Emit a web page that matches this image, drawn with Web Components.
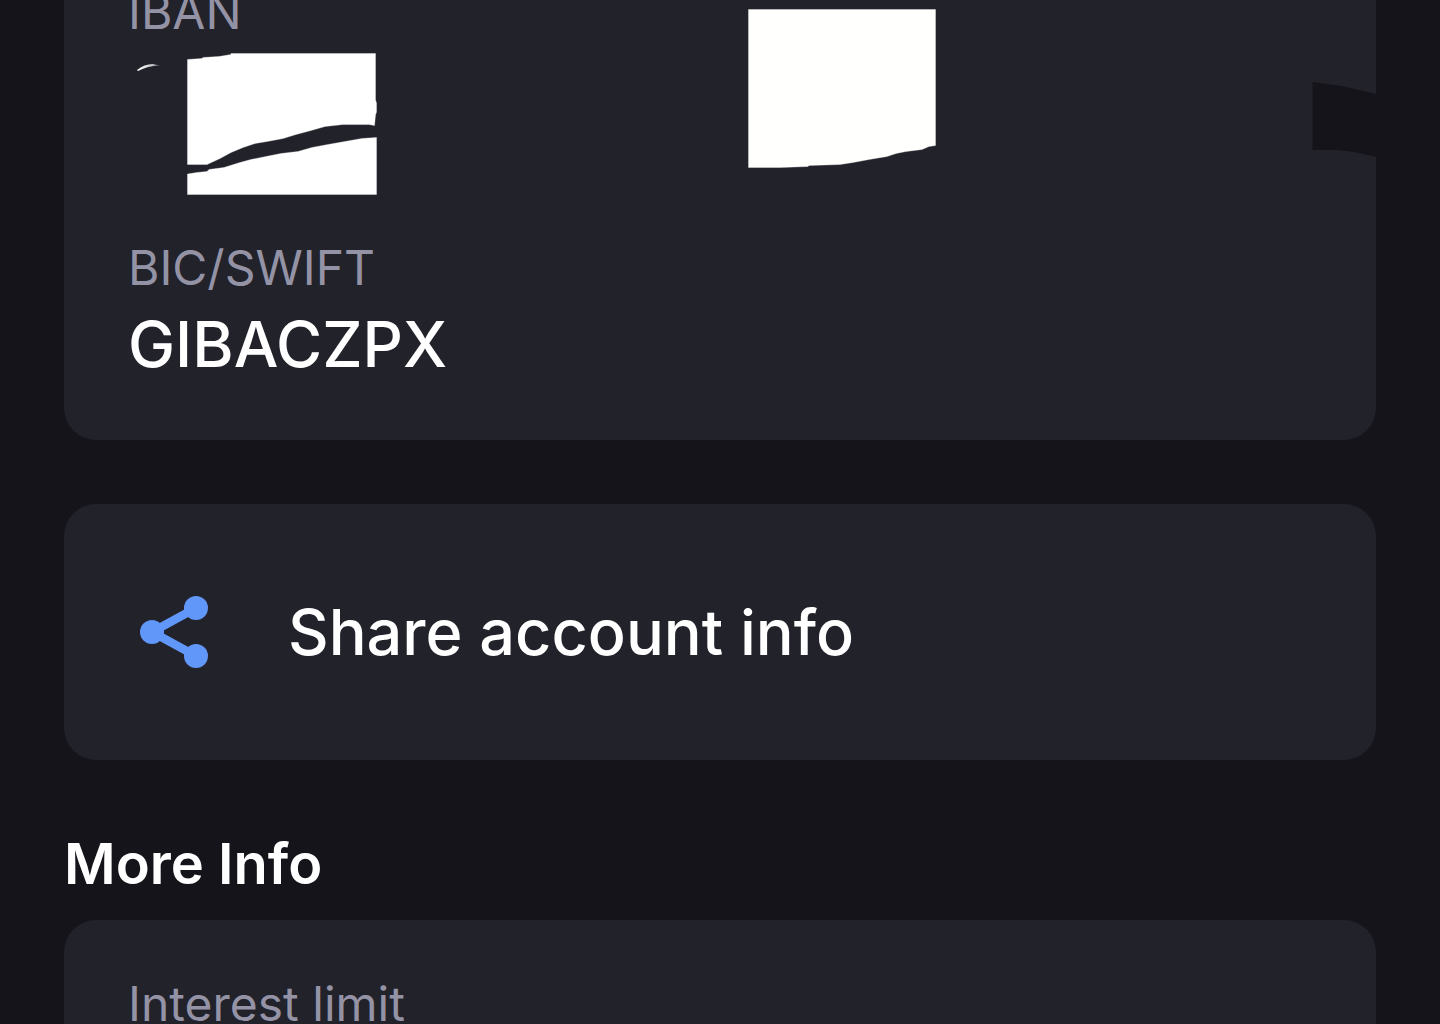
<!DOCTYPE html>
<html lang="en">
<head>
<meta charset="utf-8">
<meta name="viewport" content="width=device-width, initial-scale=1">
<title>Account details</title>
<style>
  html, body { margin: 0; height: 100%; overflow: hidden; background: #15141a; }
  body { font-family: Inter, "Liberation Sans", sans-serif; color: #fff; }
</style>
</head>
<body>
<account-page>
  <info-card>
    <info-field label="IBAN"></info-field>
    <info-field label="BIC/SWIFT">GIBACZPX</info-field>
    <iban-cover slot="cover"></iban-cover>
  </info-card>
  <action-card><share-icon slot="icon"></share-icon>Share account info</action-card>
  <info-section heading="More Info">
    <info-card>
      <info-field label="Interest limit"></info-field>
    </info-card>
  </info-section>
</account-page>

<script>
const define = (name, html, setup) => {
  customElements.define(name, class extends HTMLElement {
    constructor() {
      super();
      this.attachShadow({ mode: "open" }).innerHTML = html;
    }
    connectedCallback() { if (setup) setup(this, this.shadowRoot); }
  });
};

/* The page is scrolled: the first card begins above the window. */
define("account-page", `
  <style>
    :host { display: block; height: 100vh; overflow: hidden; }
    main { display: flex; flex-direction: column; gap: 64px; padding: 0 64px; margin-top: -72px; }
  </style>
  <main><slot></slot></main>`);

define("info-card", `
  <style>
    :host { display: block; position: relative; overflow: hidden; border-radius: 32px; background: #22222b; }
    .fields { display: flex; flex-direction: column; gap: 104px; padding: 48px 64px 56px; }
  </style>
  <div class="fields"><slot></slot></div>
  <slot name="cover"></slot>`);

define("info-field", `
  <style>
    :host { display: block; }
    dl, dt, dd { margin: 0; }
    dt { font-size: 48px; line-height: 72px; color: #9493a5; }
    dd { font-size: 63px; line-height: 80px; min-height: 80px; font-weight: 500; }
  </style>
  <dl><dt></dt><dd><slot></slot></dd></dl>`,
  (host, root) => { root.querySelector("dt").textContent = host.getAttribute("label"); });

define("action-card", `
  <style>
    :host { display: block; }
    button {
      display: flex; align-items: center; gap: 64px; width: 100%;
      margin: 0; padding: 80px 64px; border: 0; border-radius: 32px;
      background: #22222b; color: inherit; font: inherit;
      font-size: 63px; line-height: 96px; font-weight: 500; text-align: left; cursor: pointer;
    }
  </style>
  <button type="button"><slot name="icon"></slot><span><slot></slot></span></button>`);

define("share-icon", `
  <style>
    :host { display: block; flex: none; width: 96px; height: 96px; }
    svg { display: block; width: 100%; height: 100%; }
  </style>
  <svg viewBox="0 0 96 96" fill="#6197f8" aria-hidden="true">
    <path d="M68 24 24 48 68 72" fill="none" stroke="#6197f8" stroke-width="8.500"/>
    <circle cx="24" cy="48" r="12"/><circle cx="68" cy="24" r="12"/><circle cx="68" cy="72" r="12"/>
  </svg>`);

define("info-section", `
  <style>
    :host { display: block; }
    h2 { margin: 0 0 16px; font-size: 56px; line-height: 80px; font-weight: 600; }
  </style>
  <section><h2></h2><slot></slot></section>`,
  (host, root) => { root.querySelector("h2").textContent = host.getAttribute("heading"); });

/* Painted-over patches that hide the account number. */
define("iban-cover", `
  <style>
    :host { position: absolute; inset: 0; pointer-events: none; }
    svg { display: block; width: 100%; height: 100%; overflow: visible; }
  </style>
  <svg aria-hidden="true">
    <defs>
      <linearGradient id="fade"><stop offset="0" stop-color="#fff"/><stop offset=".6" stop-color="#ccc"/><stop offset="1" stop-color="#22222b"/></linearGradient>
    </defs>
    <g transform="translate(-64 72)" fill="#fff">
      <path fill="url(#fade)" d="M137 70Q144 64 153 64L162 66Q150 65 138 71Z"/>
      <path stroke="#fff" stroke-opacity=".35" d="M187.500 59.500 202 58.500 203 57.500 219 56.500 231 54.500V53.500H375.500V100L376.500 103V112L375.500 115 374.500 125.500 369 124.500H343L325 126.500 311 130.500 296 134.500 283 138.500 267 141.500 255 143.500 243 147.500 231 152.500 220 158.500 207 164.500H187.500Z"/>
      <path stroke="#fff" stroke-opacity=".35" d="M187.500 174 197 172.500 207 171.500 209 169.500 224 167.500 240 162.500 251 159.500 266 156.500 281 153.500 298 151.500 312 147.500 328 144.500 345 141.500 362 138.500 376.500 137.500V194.500H187.500Z"/>
      <path fill="#fffffd" stroke="#fff" stroke-opacity=".35" d="M748.500 9.500H935.500V145.500L929 146.500 922 149.500 906 151.500 896 153.500 887 156.500 869 159.500 853 162.500 840 164.500 809 165.500 808 166.500 780 167.500H748.500Z"/>
    </g>
    <svg x="100%" overflow="visible">
      <path transform="translate(0 72)" fill="#15141a" d="M-63.500 82 -34 86 0 94V157L-22 152 -38 150H-63.500Z"/>
    </svg>
  </svg>`);
</script>
</body>
</html>
